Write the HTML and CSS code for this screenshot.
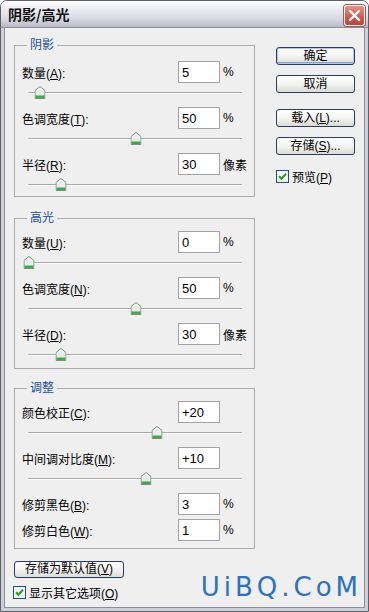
FILE: index.html
```html
<!DOCTYPE html>
<html lang="zh-CN">
<head>
  <meta charset="UTF-8">
  <title>阴影/高光</title>
  <link rel="stylesheet" href="styles.css">
</head>
<body>
  <div class="window">
    <div class="titlebar">
      <span class="title">阴影/高光</span>
      <button class="close">
        <svg width="19" height="19" viewBox="0 0 19 19"><path d="M5 5 L14 14 M14 5 L5 14" stroke="#fff" stroke-width="2.4" stroke-linecap="round"/></svg>
      </button>
    </div>

    <div class="body">
      <div class="main">
        <div class="groups">
          <fieldset class="group first">
            <legend>阴影</legend>
            <div class="field">
              <div class="row"><label>数量(<u>A</u>):</label><input type="text" value="5"><span class="unit">%</span></div>
              <div class="slider"><div class="track"><div class="rail"><span class="thumb" style="left: 5%"><svg width="11" height="13" viewBox="0 0 11 13"><path d="M5.5 0.5 L10.5 4.5 V12.5 H0.5 V4.5 Z" fill="#e8ece8" stroke="#7f8f80"/><path d="M1 9.5 H10 V12 H1 Z" fill="#3fa84a"/><path d="M2 5 L5.5 2 L9 5" fill="none" stroke="#fff"/></svg></span></div></div></div>
            </div>
            <div class="field">
              <div class="row"><label>色调宽度(<u>T</u>):</label><input type="text" value="50"><span class="unit">%</span></div>
              <div class="slider"><div class="track"><div class="rail"><span class="thumb" style="left: 50%"><svg width="11" height="13" viewBox="0 0 11 13"><path d="M5.5 0.5 L10.5 4.5 V12.5 H0.5 V4.5 Z" fill="#e8ece8" stroke="#7f8f80"/><path d="M1 9.5 H10 V12 H1 Z" fill="#3fa84a"/><path d="M2 5 L5.5 2 L9 5" fill="none" stroke="#fff"/></svg></span></div></div></div>
            </div>
            <div class="field">
              <div class="row"><label>半径(<u>R</u>):</label><input type="text" value="30"><span class="unit">像素</span></div>
              <div class="slider"><div class="track"><div class="rail"><span class="thumb" style="left: 15%"><svg width="11" height="13" viewBox="0 0 11 13"><path d="M5.5 0.5 L10.5 4.5 V12.5 H0.5 V4.5 Z" fill="#e8ece8" stroke="#7f8f80"/><path d="M1 9.5 H10 V12 H1 Z" fill="#3fa84a"/><path d="M2 5 L5.5 2 L9 5" fill="none" stroke="#fff"/></svg></span></div></div></div>
            </div>
          </fieldset>

          <fieldset class="group second">
            <legend>高光</legend>
            <div class="field">
              <div class="row"><label>数量(<u>U</u>):</label><input type="text" value="0"><span class="unit">%</span></div>
              <div class="slider"><div class="track"><div class="rail"><span class="thumb" style="left: 0%"><svg width="11" height="13" viewBox="0 0 11 13"><path d="M5.5 0.5 L10.5 4.5 V12.5 H0.5 V4.5 Z" fill="#e8ece8" stroke="#7f8f80"/><path d="M1 9.5 H10 V12 H1 Z" fill="#3fa84a"/><path d="M2 5 L5.5 2 L9 5" fill="none" stroke="#fff"/></svg></span></div></div></div>
            </div>
            <div class="field">
              <div class="row"><label>色调宽度(<u>N</u>):</label><input type="text" value="50"><span class="unit">%</span></div>
              <div class="slider"><div class="track"><div class="rail"><span class="thumb" style="left: 50%"><svg width="11" height="13" viewBox="0 0 11 13"><path d="M5.5 0.5 L10.5 4.5 V12.5 H0.5 V4.5 Z" fill="#e8ece8" stroke="#7f8f80"/><path d="M1 9.5 H10 V12 H1 Z" fill="#3fa84a"/><path d="M2 5 L5.5 2 L9 5" fill="none" stroke="#fff"/></svg></span></div></div></div>
            </div>
            <div class="field">
              <div class="row"><label>半径(<u>D</u>):</label><input type="text" value="30"><span class="unit">像素</span></div>
              <div class="slider"><div class="track"><div class="rail"><span class="thumb" style="left: 15%"><svg width="11" height="13" viewBox="0 0 11 13"><path d="M5.5 0.5 L10.5 4.5 V12.5 H0.5 V4.5 Z" fill="#e8ece8" stroke="#7f8f80"/><path d="M1 9.5 H10 V12 H1 Z" fill="#3fa84a"/><path d="M2 5 L5.5 2 L9 5" fill="none" stroke="#fff"/></svg></span></div></div></div>
            </div>
          </fieldset>

          <fieldset class="group third">
            <legend>调整</legend>
            <div class="field">
              <div class="row"><label>颜色校正(<u>C</u>):</label><input type="text" value="+20"></div>
              <div class="slider"><div class="track"><div class="rail"><span class="thumb" style="left: 60%"><svg width="11" height="13" viewBox="0 0 11 13"><path d="M5.5 0.5 L10.5 4.5 V12.5 H0.5 V4.5 Z" fill="#e8ece8" stroke="#7f8f80"/><path d="M1 9.5 H10 V12 H1 Z" fill="#3fa84a"/><path d="M2 5 L5.5 2 L9 5" fill="none" stroke="#fff"/></svg></span></div></div></div>
            </div>
            <div class="field">
              <div class="row"><label>中间调对比度(<u>M</u>):</label><input type="text" value="+10"></div>
              <div class="slider"><div class="track"><div class="rail"><span class="thumb" style="left: 55%"><svg width="11" height="13" viewBox="0 0 11 13"><path d="M5.5 0.5 L10.5 4.5 V12.5 H0.5 V4.5 Z" fill="#e8ece8" stroke="#7f8f80"/><path d="M1 9.5 H10 V12 H1 Z" fill="#3fa84a"/><path d="M2 5 L5.5 2 L9 5" fill="none" stroke="#fff"/></svg></span></div></div></div>
            </div>
            <div class="row"><label>修剪黑色(<u>B</u>):</label><input type="text" value="3"><span class="unit">%</span></div>
            <div class="row"><label>修剪白色(<u>W</u>):</label><input type="text" value="1"><span class="unit">%</span></div>
          </fieldset>
        </div>

        <div class="side">
          <button class="btn default">确定</button>
          <button class="btn cancel">取消</button>
          <button class="btn load">载入(<u>L</u>)...</button>
          <button class="btn save">存储(<u>S</u>)...</button>
          <label class="check">
            <svg width="13" height="13" viewBox="0 0 13 13"><rect x="0.5" y="0.5" width="12" height="12" fill="#f6f6f2" stroke="#1c5180"/><path d="M3 6.3 L5.4 8.8 L10 3.8" fill="none" stroke="#21a121" stroke-width="2"/></svg>
            <span>预览(<u>P</u>)</span>
          </label>
        </div>
      </div>

      <div class="footer">
        <div class="footer-left">
          <button class="btn wide">存储为默认值(<u>V</u>)</button>
          <label class="check">
            <svg width="13" height="13" viewBox="0 0 13 13"><rect x="0.5" y="0.5" width="12" height="12" fill="#f6f6f2" stroke="#1c5180"/><path d="M3 6.3 L5.4 8.8 L10 3.8" fill="none" stroke="#21a121" stroke-width="2"/></svg>
            <span>显示其它选项(<u>O</u>)</span>
          </label>
        </div>
        <div class="logo">UiBQ.CoM</div>
      </div>
    </div>
  </div>
</body>
</html>
```

FILE: styles.css
```css
* {
  box-sizing: border-box;
}

body {
  margin: 0;
  font-family: "Liberation Sans", "Noto Sans CJK SC", sans-serif;
  font-size: 12px;
  color: #000;
  background: #fff;
}

.window {
  width: 369px;
  height: 612px;
  border: 1px solid #5e5e6b;
  border-radius: 7px 7px 0 0;
  display: flex;
  flex-direction: column;
  background: #efefef;
  overflow: hidden;
}

.titlebar {
  height: 27px;
  flex: none;
  display: flex;
  align-items: center;
  justify-content: space-between;
  padding: 0 3px 0 7px;
  background: linear-gradient(#ffffff 0%, #ececf2 30%, #d8d8e2 70%, #b9b9c7 100%);
  border-bottom: 1px solid #8f8f9c;
}

.title {
  font-family: "Noto Sans CJK SC", sans-serif;
  font-weight: bold;
  font-size: 14px;
  color: #111;
}

.close {
  width: 21px;
  height: 21px;
  margin-top: 3px;
  padding: 0;
  display: flex;
  align-items: center;
  justify-content: center;
  border: 1px solid #fff;
  border-radius: 3px;
  background: linear-gradient(#e99284, #d05a4a 60%, #c0433a);
  box-shadow: 0 0 0 1px #a8574e;
}

.body {
  flex: 1;
  border: 3px solid #cfcfd8;
  border-top: 0;
  box-shadow: inset 1px 0 #8e8e9a, inset -1px 0 #8e8e9a, inset 0 -1px #8e8e9a;
  padding: 10px 9px 0 10px;
}

.main {
  display: flex;
  align-items: flex-start;
}

.groups {
  width: 241px;
  flex: none;
}

.group {
  margin: 0;
  padding: 6px 12px 0 7px;
  border: 1px solid #acacac;
  min-width: 0;
}

.group.first {
  padding-top: 9px;
}

.group.second {
  margin-top: 14px;
  padding-bottom: 2px;
}

.group.third {
  margin-top: 12px;
  padding-bottom: 7px;
}

.group legend {
  margin-left: 5px;
  padding: 0 3px;
  line-height: 14px;
  font-size: 12px;
  color: #1b4f9c;
}

.field + .field,
.field + .row {
  margin-top: 3px;
}

.row + .row {
  margin-top: 4px;
}

.row {
  display: flex;
  align-items: center;
  height: 22px;
  white-space: nowrap;
}

.row label {
  width: 156px;
  flex: none;
}

.row input {
  flex: none;
  width: 42px;
  height: 22px;
  border: 1px solid #a3a3a3;
  padding: 0 0 0 3px;
  font-family: "Liberation Sans", sans-serif;
  font-size: 13px;
  color: #000;
  background: #fff;
}

.unit {
  flex: none;
  margin-left: 3px;
}

.slider {
  height: 21px;
  padding-top: 9px;
  margin-left: 6px;
}

.track {
  height: 2px;
  border-top: 1px solid #a9a9a9;
  border-bottom: 1px solid #fff;
  border-radius: 1px;
}

.rail {
  position: relative;
  margin-left: 1px;
  height: 0;
}

.thumb {
  position: absolute;
  top: -7px;
  transform: translateX(-50%);
  display: block;
  width: 11px;
  height: 13px;
}

.thumb svg {
  display: block;
}

.side {
  margin-left: 21px;
  padding-top: 9px;
  width: 79px;
  flex: none;
  display: flex;
  flex-direction: column;
}

.btn {
  width: 79px;
  height: 18px;
  padding: 0;
  font-family: "Liberation Sans", "Noto Sans CJK SC", sans-serif;
  font-size: 12px;
  line-height: 16px;
  color: #000;
  border: 1px solid #2b3d5e;
  border-radius: 3px;
  background: linear-gradient(#ffffff, #f3f3f0 50%, #dcdcd6);
}

.btn.default {
  box-shadow: inset 0 0 0 1px #b4c8ec, inset 0 -1px 0 1px #7fa0dc;
}

.btn.cancel {
  margin-top: 10px;
}

.btn.load {
  margin-top: 16px;
}

.btn.save {
  margin-top: 10px;
}

.check {
  display: flex;
  align-items: center;
  gap: 3px;
  height: 13px;
  white-space: nowrap;
}

.check svg {
  display: block;
  flex: none;
}

.side .check {
  margin-top: 15px;
}

.footer {
  display: flex;
  justify-content: space-between;
  align-items: flex-end;
  margin-top: 12px;
}

.footer-left {
  display: flex;
  flex-direction: column;
}

.btn.wide {
  width: 110px;
  height: 17px;
  line-height: 15px;
}

.footer .check {
  margin-top: 8px;
  margin-left: -1px;
}

.logo {
  font-family: "DejaVu Sans", sans-serif;
  font-size: 26px;
  line-height: 26px;
  letter-spacing: 4px;
  color: #2a73c0;
  margin-right: -6px;
  margin-bottom: -1px;
}
```
